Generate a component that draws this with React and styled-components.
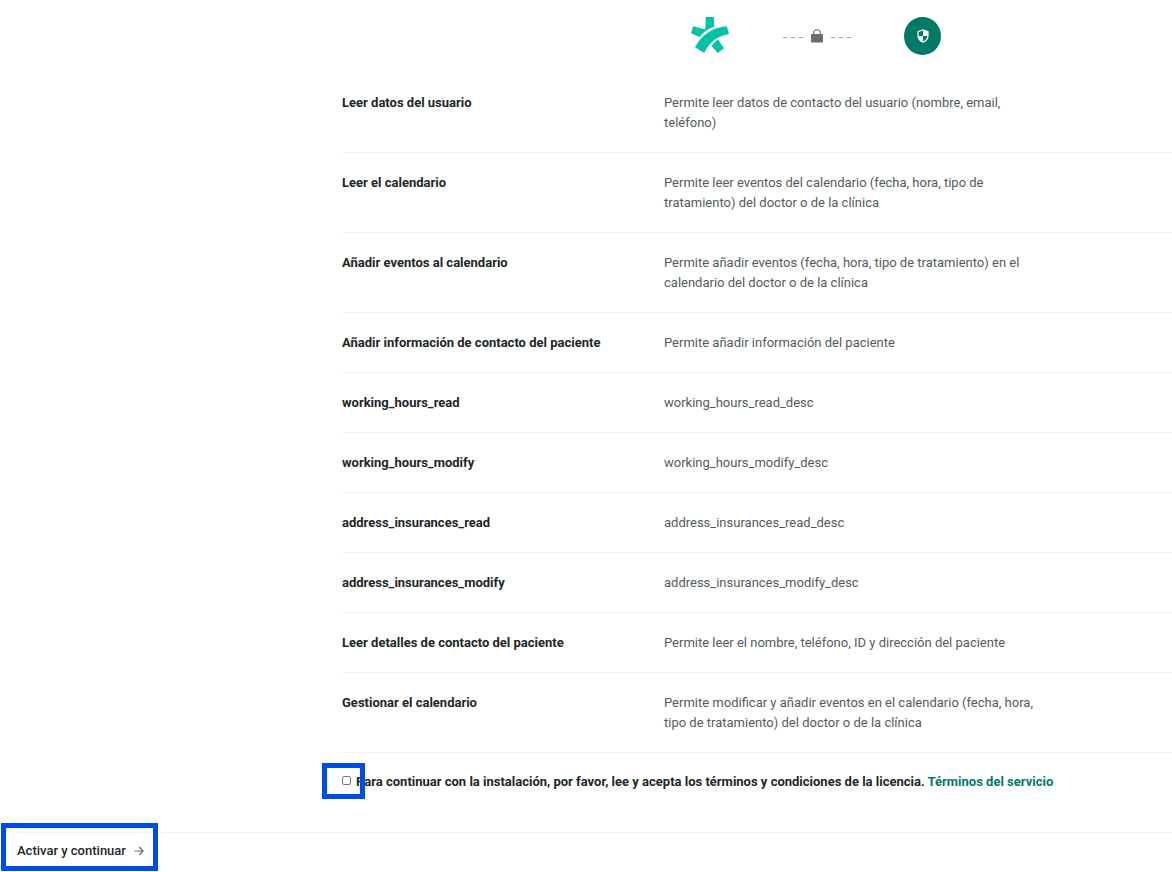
import React from 'react';
import styled, { createGlobalStyle } from 'styled-components';

const permissions = [
  { name: 'Leer datos del usuario', desc: 'Permite leer datos de contacto del usuario (nombre, email, teléfono)' },
  { name: 'Leer el calendario', desc: 'Permite leer eventos del calendario (fecha, hora, tipo de tratamiento) del doctor o de la clínica' },
  { name: 'Añadir eventos al calendario', desc: 'Permite añadir eventos (fecha, hora, tipo de tratamiento) en el calendario del doctor o de la clínica' },
  { name: 'Añadir información de contacto del paciente', desc: 'Permite añadir información del paciente' },
  { name: 'working_hours_read', desc: 'working_hours_read_desc' },
  { name: 'working_hours_modify', desc: 'working_hours_modify_desc' },
  { name: 'address_insurances_read', desc: 'address_insurances_read_desc' },
  { name: 'address_insurances_modify', desc: 'address_insurances_modify_desc' },
  { name: 'Leer detalles de contacto del paciente', desc: 'Permite leer el nombre, teléfono, ID y dirección del paciente' },
  { name: 'Gestionar el calendario', desc: 'Permite modificar y añadir eventos en el calendario (fecha, hora, tipo de tratamiento) del doctor o de la clínica' },
];

function BrandLogo() {
  return (
    <svg width="39" height="38" viewBox="0 0 39 38" fill="#00c3a5" aria-hidden="true">
      <path d="M14.8 0H22.8L23.3 9.8C19.4 11 16.2 12.8 13.2 15.2C11.4 16.6 9.8 18.2 8.5 20L0 16.3L2.2 9.2L14.2 12.6Z" />
      <path d="M35.8 9.3L38 17C26.5 18.8 18.3 25 13.2 36L4 30.2C10.8 17.6 21.6 10.4 35.8 9.3Z" />
      <path d="M26.9 22.4L33 31.2L26.7 36L20.6 29C22.4 26.4 24.4 24.2 26.9 22.4Z" />
    </svg>
  );
}

function LockIcon() {
  return (
    <svg width="12" height="14" viewBox="0 0 12 14" aria-hidden="true">
      <path d="M2.7 6V4a3.3 3.3 0 0 1 6.6 0V6" fill="none" stroke="#66716e" strokeWidth="1.1" />
      <rect x="0" y="5" width="12" height="8.6" rx="1" fill="#66716e" />
    </svg>
  );
}

function ShieldIcon() {
  return (
    <svg width="12" height="14" viewBox="0 0 12 14" aria-hidden="true">
      <path d="M6 0.8L11 2.6V6.6C11 9.7 9 12 6 13.2C3 12 1 9.7 1 6.6V2.6Z" fill="#007a66" stroke="#fff" strokeWidth="1.2" />
      <path d="M6 1L11 2.6V7H6Z" fill="#fff" />
      <path d="M6 7H1.2C1.4 9.8 3.2 12 6 13Z" fill="#fff" />
    </svg>
  );
}

function ArrowIcon() {
  return (
    <svg width="10" height="10" viewBox="0 0 10 10" fill="none" stroke="#66716e" strokeWidth="1.2" aria-hidden="true">
      <path d="M0.5 5H9M5.2 1L9.2 5L5.2 9" />
    </svg>
  );
}

function App() {
  return (
    <>
      <GlobalStyle />
      <Page>
        <Connection>
          <BrandLogo />
          <Link>
            <Dashes>
              <i /><i /><i />
            </Dashes>
            <LockIcon />
            <Dashes>
              <i /><i /><i />
            </Dashes>
          </Link>
          <AppBadge>
            <ShieldIcon />
          </AppBadge>
        </Connection>

        <Content>
          <Permissions>
            <tbody>
              {permissions.map(({ name, desc }) => (
                <tr key={name}>
                  <th scope="row">{name}</th>
                  <td>
                    <Description>{desc}</Description>
                  </td>
                </tr>
              ))}
            </tbody>
          </Permissions>

          <Consent>
            <CheckHolder>
              <input type="checkbox" id="terms" />
              <Highlight $top={-9} $right={-14} $bottom={-12} $left={-20} />
            </CheckHolder>
            <p>
              <label htmlFor="terms">
                Para continuar con la instalación, por favor, lee y acepta los términos y condiciones de la licencia.
              </label>{' '}
              <a href="#terminos">Términos del servicio</a>
            </p>
          </Consent>
        </Content>

        <Footer>
          <ActivateButton type="button">
            Activar y continuar
            <ArrowIcon />
            <Highlight $top={-18} $right={-14} $bottom={-10} $left={-16} />
          </ActivateButton>
        </Footer>
      </Page>
    </>
  );
}

const GlobalStyle = createGlobalStyle`
  * {
    box-sizing: border-box;
  }

  body {
    margin: 0;
    background: #fff;
    color: #222626;
    font-family: Roboto, "Liberation Sans", sans-serif;
    font-size: 13px;
    line-height: 20px;
  }
`;

const Page = styled.main`
  overflow-x: hidden;
`;

const Connection = styled.header`
  display: flex;
  align-items: center;
  justify-content: center;
  gap: 53px;
  padding: 17px 0 18px 460px;
`;

const Link = styled.div`
  display: flex;
  align-items: center;
  gap: 8px;
`;

const Dashes = styled.span`
  display: flex;
  gap: 4px;
  padding-top: 3px;

  i {
    width: 4px;
    height: 1px;
    background: #99a0a8;
  }
`;

const AppBadge = styled.div`
  display: flex;
  align-items: center;
  justify-content: center;
  width: 37px;
  height: 38px;
  border-radius: 50%;
  background: #007a66;
`;

const Content = styled.section`
  padding-left: 342px;
`;

const Permissions = styled.table`
  width: 100%;
  table-layout: fixed;
  border-collapse: separate;
  border-spacing: 0;

  th,
  td {
    padding: 20px 0 19px;
    border-bottom: 1px solid #f2f3f3;
    text-align: left;
    vertical-align: top;
  }

  th {
    width: 322px;
    font-weight: 700;
  }

  td {
    color: #545c5a;
  }
`;

const Description = styled.p`
  max-width: 390px;
  margin: 0;
`;

const Consent = styled.div`
  display: flex;
  gap: 5px;
  padding: 19px 0 40px;
  font-weight: 700;

  p {
    margin: 0;
  }

  a {
    color: #007a66;
    text-decoration: none;
  }
`;

const CheckHolder = styled.span`
  position: relative;
  height: 15px;

  input {
    appearance: none;
    display: block;
    width: 9px;
    height: 9px;
    margin: 4px 0 0;
    border: 1px solid #767676;
    border-radius: 2px;
    background: #fff;

    &:checked {
      background: #007a66;
    }
  }
`;

// Blue frame that points the reader at a control
const Highlight = styled.span`
  position: absolute;
  top: ${({ $top }) => $top}px;
  right: ${({ $right }) => $right}px;
  bottom: ${({ $bottom }) => $bottom}px;
  left: ${({ $left }) => $left}px;
  border: 5px solid #004de6;
  pointer-events: none;
`;

const Footer = styled.footer`
  margin-left: 15px;
  padding: 8px 0 12px 2px;
  border-top: 1px solid #f2f3f3;
`;

const ActivateButton = styled.button`
  position: relative;
  display: flex;
  align-items: center;
  gap: 8px;
  padding: 0;
  border: 0;
  background: none;
  color: #222626;
  font: inherit;
  font-weight: 500;
  cursor: pointer;
`;

export default App;
